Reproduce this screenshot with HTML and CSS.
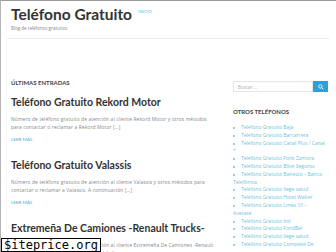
FILE: index.html
```html
<!DOCTYPE html>
<html lang="es">
<head>
<meta charset="utf-8">
<title>Teléfono Gratuito</title>
<link rel="stylesheet" href="styles.css">
</head>
<body>
<div class="page">
  <header class="site-header">
    <div class="title-row">
      <span class="site-title">Teléfono Gratuito</span>
      <a class="nav-link" href="#">INICIO</a>
    </div>
    <p class="tagline">Blog de teléfonos gratuitos</p>
  </header>
  <div class="content">
    <main class="main">
      <h2 class="section-title">ÚLTIMAS ENTRADAS</h2>
      <article class="post">
        <h3 class="post-title">Teléfono Gratuito Rekord Motor</h3>
        <p class="excerpt">Número de teléfono gratuito de atención al cliente Rekord Motor y otros métodos para contactar o reclamar a Rekord Motor […]</p>
        <a class="more" href="#">LEER MÁS</a>
      </article>
      <article class="post">
        <h3 class="post-title">Teléfono Gratuito Valassis</h3>
        <p class="excerpt">Número de teléfono gratuito de atención al cliente Valassis y otros métodos para contactar o reclamar a Valassis. A continuación […]</p>
        <a class="more" href="#">LEER MÁS</a>
      </article>
      <article class="post">
        <h3 class="post-title">Extremeña De Camiones -Renault Trucks-</h3>
        <p class="excerpt">Número de teléfono gratuito de atención al cliente Extremeña De Camiones -Renault Trucks- y otros métodos para contactar […]</p>
      </article>
    </main>
    <aside class="sidebar">
      <form class="search">
        <input class="search-input" type="text" placeholder="Buscar ...">
        <button class="search-btn" type="button">
          <svg viewBox="0 0 10 10" width="6" height="6"><circle cx="4" cy="4" r="2.8" fill="none" stroke="#fff" stroke-width="1.4"/><line x1="6" y1="6" x2="9" y2="9" stroke="#fff" stroke-width="1.6"/></svg>
        </button>
      </form>
      <h4 class="widget-title">OTROS TELÉFONOS</h4>
      <ul class="links">
        <li><a href="#">Teléfono Gratuito Baja</a></li>
        <li><a href="#">Teléfono Gratuito Barcarrera</a></li>
        <li><a href="#">Teléfono Gratuito Canal Plus / Canal +</a></li>
        <li><a href="#">Teléfono Gratuito Fonk Zamora</a></li>
        <li><a href="#">Teléfono Gratuito Blive Seguros</a></li>
        <li><a href="#">Teléfono Gratuito Banesto – Banca Telefónica</a></li>
        <li><a href="#">Teléfono Gratuito Ilege salud</a></li>
        <li><a href="#">Teléfono Gratuito Hotel Walter</a></li>
        <li><a href="#">Teléfono Gratuito Linea 10 –<br>Acetaxe</a></li>
        <li><a href="#">Teléfono Gratuito Init</a></li>
        <li><a href="#">Teléfono Gratuito FondBel</a></li>
        <li><a href="#">Teléfono Gratuito Ilege salud</a></li>
        <li><a href="#">Teléfono Gratuito Complete De</a></li>
      </ul>
    </aside>
  </div>
  <div class="watermark">$iteprice.org</div>
</div>
</body>
</html>
```
FILE: styles.css
```css
* { box-sizing: border-box; }
html, body { margin: 0; padding: 0; background: #fff; }
body { font-family: "Open Sans", "Liberation Sans", sans-serif; color: #777; }
.page {
  position: relative;
  width: 336px;
  height: 252px;
  overflow: hidden;
  border-top: 1px solid #999;
  border-left: 1px solid #b5b5b5;
}
.site-header {
  margin: 0 7px 0 6px;
  padding: 4px 0 0 4px;
  height: 38px;
  border-bottom: 1px solid #eaeaea;
}
.title-row { display: flex; align-items: flex-start; gap: 6px; }
.site-title {
  font-family: "Lato", sans-serif;
  font-weight: 700;
  font-size: 15.5px;
  line-height: 18px;
  color: #333;
}
.nav-link {
  font-family: "Lato", sans-serif;
  font-size: 4.5px;
  color: #5cc6e0;
  text-decoration: none;
  margin-top: 4px;
}
.tagline {
  margin: 2px 0 0;
  font-size: 4.5px;
  line-height: 6px;
  color: #888;
}
.content {
  display: flex;
  padding: 0 8px 0 10px;
  gap: 17px;
}
.main { width: 205px; flex: none; padding-top: 40px; }
.section-title {
  margin: 0 0 8px;
  font-family: "Lato", sans-serif;
  font-weight: 700;
  font-size: 6px;
  line-height: 8px;
  color: #444;
}
.post { margin-bottom: 15px; }
.post-title {
  margin: 0 0 6px;
  font-family: "Lato", sans-serif;
  font-weight: 700;
  font-size: 10.5px;
  line-height: 14px;
  color: #333;
}
.excerpt {
  margin: 0 0 6px;
  font-size: 4.9px;
  letter-spacing: 0.12px;
  line-height: 8px;
  color: #888;
}
.more {
  display: block;
  font-family: "Lato", sans-serif;
  font-size: 4.5px;
  line-height: 6px;
  color: #3ab0c8;
  text-decoration: none;
}
.sidebar { flex: 1; padding-top: 42px; }
.search { display: flex; height: 11px; margin: 0; }
.search-input {
  flex: 1;
  min-width: 0;
  height: 11px;
  border: 1px solid #e6e6e6;
  padding: 0 4px;
  font-family: "Open Sans", sans-serif;
  font-size: 4.5px;
  color: #999;
  outline: none;
}
.search-input::placeholder { color: #aaa; }
.search-btn {
  width: 15px;
  height: 11px;
  border: 0;
  padding: 0;
  background: #2e9fd8;
  display: flex;
  align-items: center;
  justify-content: center;
}
.widget-title {
  margin: 16px 0 8px;
  font-family: "Lato", sans-serif;
  font-weight: 700;
  font-size: 6px;
  line-height: 8px;
  color: #444;
}
.links {
  margin: 0;
  padding: 0;
  list-style: disc inside;
  font-size: 5px;
  line-height: 7.8px;
  color: #6fbfdc;
}
.links a { color: #6fbfdc; text-decoration: none; }
.watermark {
  position: absolute;
  left: 0;
  bottom: 0;
  padding: 0 2px;
  background: #fff;
  border: 1px solid #000;
  font-family: "DejaVu Sans Mono", monospace;
  font-size: 12px;
  line-height: 12px;
  color: #000;
}
```
